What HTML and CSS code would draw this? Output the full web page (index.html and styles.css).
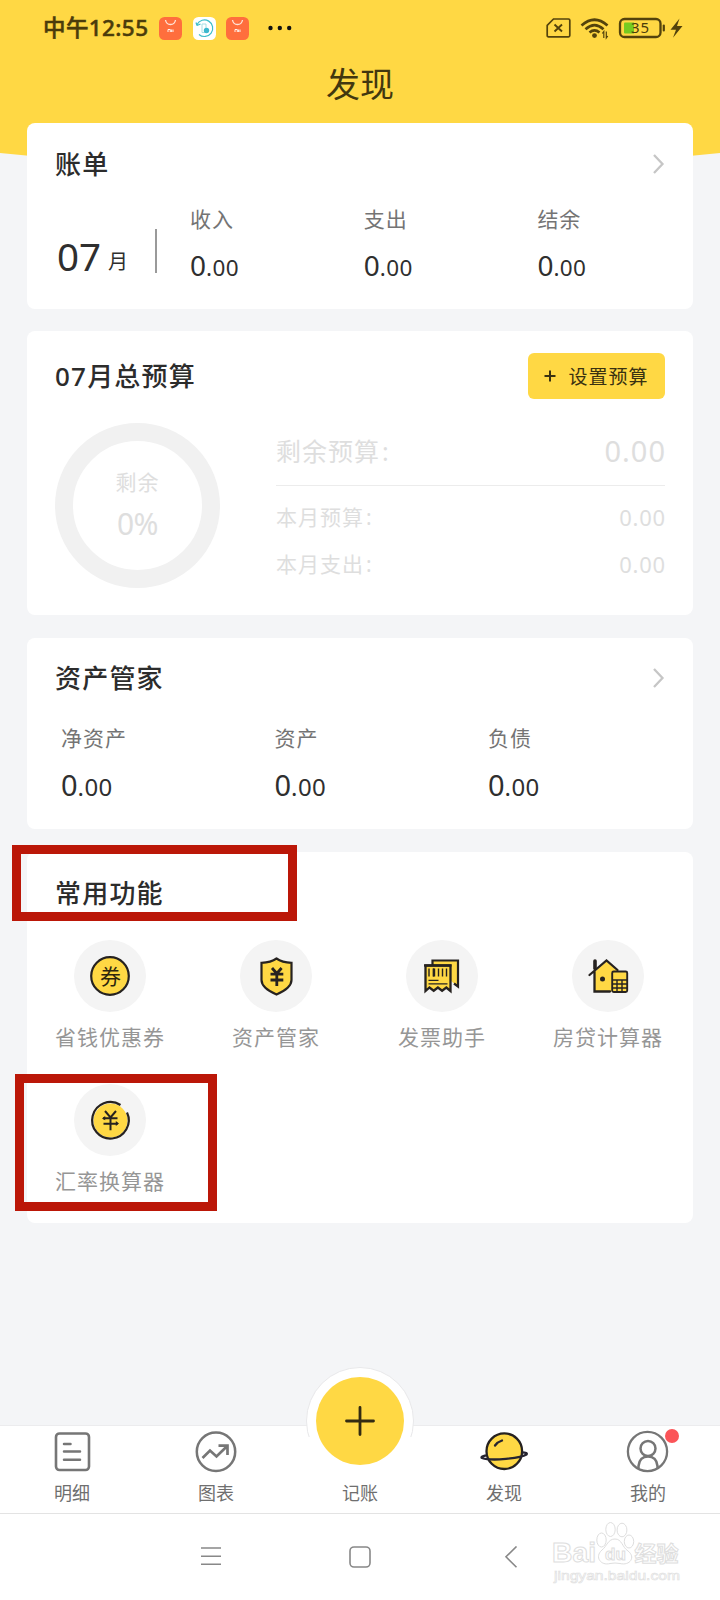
FILE: index.html
```
<!DOCTYPE html>
<html lang="zh-CN">
<head>
<meta charset="utf-8">
<title>发现</title>
<link rel="stylesheet" href="styles.css">
</head>
<body>
<div class="phone">
  <svg class="header-bg" viewBox="0 0 720 172" width="720" height="172"><path d="M0 0H720V153Q360 191 0 153Z" fill="#ffd844"/></svg>
  <header class="statusbar">
    <span class="clock">中午12:55</span>
    <svg class="app" viewBox="0 0 23 23"><rect width="23" height="23" rx="5.5" fill="#ff6e3d"/><path d="M6.5 3c1 6 9 6 10 0" fill="none" stroke="#ffe3d6" stroke-width="1.3"/><path d="M9 15v-2.500h2.300V15M12.600 12.500V15M14 12.500V15" fill="none" stroke="#fff" stroke-width=".9"/></svg>
    <svg class="app" viewBox="0 0 23 23"><rect width="23" height="23" rx="5.500" fill="#fff"/><path d="M4 7.500A8.300 8.300 0 1 1 6 17.500M4 8.500l3.500-1.500M4 8.500l-1-3" fill="none" stroke="#3dbdca" stroke-width="1.200"/><path d="M9 7h4v4M9 7v8.500h5" fill="none" stroke="#a5dfe4"/><circle cx="13.500" cy="13.500" r="2.700" fill="#3bb8ce"/></svg>
    <svg class="app" viewBox="0 0 23 23"><rect width="23" height="23" rx="5.500" fill="#ff6e3d"/><path d="M6.500 3c1 6 9 6 10 0" fill="none" stroke="#ffe3d6" stroke-width="1.300"/><path d="M9 15v-2.500h2.300V15M12.600 12.500V15M14 12.500V15" fill="none" stroke="#fff" stroke-width=".9"/></svg>
    <svg class="dots" viewBox="0 0 24 6" width="24" height="6"><g fill="#111"><circle cx="2.500" cy="3" r="2.200"/><circle cx="11.800" cy="3" r="2.200"/><circle cx="21.200" cy="3" r="2.200"/></g></svg>
    <svg class="status-icons" viewBox="0 0 138 24" width="138" height="24" fill="none" stroke="#54430c">
      <path d="M7.500 3H22.500q1.300 0 1.300 1.300V19.500q0 1.300-1.300 1.300H2.500q-1.300 0-1.300-1.300V9.300Z" stroke-width="1.700"/>
      <path d="M8.500 8.500l7.500 7M16 8.500l-7.500 7" stroke-width="1.900"/>
      <path d="M35.500 9.500Q48.500-2 61.500 9.500M39.500 13.200Q48.500 5 57.500 13.200M43.500 16.500Q48.500 12.300 53.500 16.500" stroke-width="2.700"/>
      <circle cx="48.500" cy="19.600" r="2.400" fill="#54430c" stroke="none"/>
      <path d="M57.800 22V15.500l-1.500 2M60.300 15.500V22l1.500-2" stroke-width="1.200"/>
      <rect x="74" y="3" width="40.500" height="18" rx="4.500" stroke-width="2.300"/>
      <path d="M78 7.500q0-1 1-1H88V17.500H79q-1 0-1-1Z" fill="#75cb20" stroke="none"/>
      <path d="M117.800 9.500v5" stroke-width="2.200" stroke-linecap="round"/>
      <path d="M133.500 2.500L124.500 13.800H130L127 21.800L136.500 10H131Z" fill="#54430c" stroke="none"/>
      <text x="94.500" y="17.300" text-anchor="middle" class="battery">35</text>
    </svg>
  </header>
  <h1 class="page-title">发现</h1>

  <main class="cards">
    <section class="card bill">
      <div class="card-head"><h2>账单</h2><svg class="chev" viewBox="0 0 14 22"><path d="M3 2l8.500 9L3 20"/></svg></div>
      <div class="bill-body">
        <div class="month"><b>07</b><span>月</span></div>
        <div class="stats">
          <div class="stat"><label>收入</label><p>0<small>.00</small></p></div>
          <div class="stat"><label>支出</label><p>0<small>.00</small></p></div>
          <div class="stat"><label>结余</label><p>0<small>.00</small></p></div>
        </div>
      </div>
    </section>

    <section class="card budget">
      <div class="card-head"><h2>07月总预算</h2><button class="set-budget"><svg viewBox="0 0 12 12" width="12" height="12"><path d="M6 .5v11M.5 6h11" stroke="#3a3211" stroke-width="2"/></svg><span>设置预算</span></button></div>
      <div class="budget-body">
        <div class="ring"><span>剩余</span><b>0%</b></div>
        <div class="budget-rows">
          <div class="row total"><span>剩余预算<i>:</i></span><b>0.00</b></div>
          <div class="row"><span>本月预算<i>:</i></span><b>0.00</b></div>
          <div class="row"><span>本月支出<i>:</i></span><b>0.00</b></div>
        </div>
      </div>
    </section>

    <section class="card assets">
      <div class="card-head"><h2>资产管家</h2><svg class="chev" viewBox="0 0 14 22"><path d="M3 2l8.500 9L3 20"/></svg></div>
      <div class="stats">
        <div class="stat"><label>净资产</label><p>0<small>.00</small></p></div>
        <div class="stat"><label>资产</label><p>0<small>.00</small></p></div>
        <div class="stat"><label>负债</label><p>0<small>.00</small></p></div>
      </div>
    </section>

    <section class="card tools">
      <div class="card-head"><h2>常用功能</h2></div>
      <div class="tool-grid">
        <div class="tool"><div class="disc"><svg viewBox="0 0 72 72"><circle cx="36" cy="36" r="18.800" fill="#ffd844" stroke="#262220" stroke-width="2.200"/><text x="36.500" y="43.500" text-anchor="middle" class="coupon">券</text></svg></div><span>省钱优惠券</span></div>
        <div class="tool"><div class="disc"><svg viewBox="0 0 72 72"><path d="M36.500 18.500Q42 22.500 51.500 22.800V40Q51.500 48 36.500 54.500Q21.500 48 21.500 40V22.800Q31 22.500 36.500 18.500Z" fill="#ffd844" stroke="#262220" stroke-width="2.200"/><path d="M32 28l4.800 5.500 4.800-5.500M30.500 34.200h12.800M30.500 40h12.800M36.800 33v13" fill="none" stroke="#262220" stroke-width="2.800"/></svg></div><span>资产管家</span></div>
        <div class="tool"><div class="disc"><svg viewBox="0 0 72 72" fill="none" stroke="#262220"><path d="M26.500 25V20.500H52V46.500l-4-3" fill="#ffd844" stroke-width="2.200"/><path d="M19.500 25.500H44.500V51l-4.200-3.500-4.200 3.200-4.200-3.200-4.200 3.200-4.200-3.200L19.500 51Z" fill="#ffd844" stroke-width="2.300"/><path d="M18 25.500h27.500" stroke-width="2.300"/><path d="M23 28.500v8M27.500 28.500v8M32.500 28.500v8M36.500 28.500v8M40.500 28.500v8" stroke-width="1.400"/><path d="M28 28.500v8" stroke-width="2.400"/><path d="M22.500 40.300h10M22.500 43.800h19" stroke-width="1.300"/></svg></div><span>发票助手</span></div>
        <div class="tool"><div class="disc"><svg viewBox="0 0 72 72" fill="none" stroke="#262220"><path d="M22.500 32L34.500 21.500 47 32V51.500H22.500Z" fill="#ffd844" stroke="none"/><path d="M23 28.500V21" stroke-width="3.600" stroke-linecap="round"/><path d="M17.500 35L34.500 20.500L45.500 30M22.500 31.500V51.500H38" stroke-width="2.300" stroke-linecap="round"/><circle cx="30.500" cy="39" r="2.500" fill="#262220" stroke="none"/><rect x="40.200" y="31.500" width="15" height="20.500" rx="1.500" fill="#ffd844" stroke-width="1.900"/><path d="M40 40h15M40 44h15M40 48h15M45 40v12M50 40v12" stroke-width="1.400"/></svg></div><span>房贷计算器</span></div>
        <div class="tool"><div class="disc"><svg viewBox="0 0 72 72" fill="none" stroke="#262220"><circle cx="36.500" cy="36.500" r="17" fill="#ffd844" stroke="none"/><path d="M46.500 21A18.300 18.300 0 1 0 53 28.500" stroke-width="2.200"/><path d="M31 27l5.500 6.500 5.500-6.500M29 34.200h14.500M29.500 39.700h14M36.500 33.500v12.800" stroke-width="2"/><path d="M28 34.500l3.200-2.500v4.300ZM45 39.500l-3.200-2.400v4.800Z" fill="#262220" stroke="none"/></svg></div><span>汇率换算器</span></div>
      </div>
    </section>
  </main>

  <nav class="tabbar">
    <div class="tab"><svg viewBox="0 0 48 44" fill="none" stroke="#767676"><rect x="8" y="3.500" width="33" height="36.500" rx="3.500" stroke-width="2.600"/><path d="M16 14h6.500M16 21.500h16M16 29.700h16" stroke-width="2.500" stroke-linecap="round"/></svg><span>明细</span></div>
    <div class="tab"><svg viewBox="0 0 48 44" fill="none" stroke="#767676"><circle cx="24" cy="21.700" r="19.200" stroke-width="2.500"/><path d="M10.500 28l7.500-7.500 6.500 6L35 16.200M26.500 15.700H35.500V25" stroke-width="2.700"/></svg><span>图表</span></div>
    <div class="tab add"><div class="halo"></div><div class="add-button"><svg viewBox="0 0 30 30" width="30" height="30"><path d="M15 1.500v27M1.500 15h27" stroke="#332b12" stroke-width="2.800" stroke-linecap="round"/></svg></div><span>记账</span></div>
    <div class="tab"><svg viewBox="0 0 48 44" fill="none" stroke="#262430"><circle cx="24.300" cy="21.200" r="17.800" fill="#ffd844" stroke="#262220" stroke-width="2.300"/><path d="M6 25.300Q0 27 2 28C12 31.500 41 28 46.500 24.500Q48 22.500 42 22.300" stroke-width="2.300"/><path d="M15 15.500q2.500-3.500 7-5" stroke-width="2.300" stroke-linecap="round"/></svg><span>发现</span></div>
    <div class="tab mine"><svg viewBox="0 0 48 44" fill="none" stroke="#767676"><circle cx="23.500" cy="21.500" r="19.600" stroke-width="2.300"/><circle cx="24" cy="18.500" r="7.500" stroke-width="2.500"/><path d="M14.500 38.500V36Q15.500 26.500 24 26.500T33.500 36V38" stroke-width="2.500"/></svg><i class="badge"></i><span>我的</span></div>
  </nav>

  <footer class="sysnav">
    <svg viewBox="0 0 22 22"><path d="M1 2h20M1 10.200h20M1 18.300h20"/></svg>
    <svg viewBox="0 0 22 22"><rect x="1" y="1" width="20" height="20" rx="4"/></svg>
    <svg viewBox="0 0 22 22"><path d="M18.500 .5L8 10.800l10.500 10.500"/></svg>
  </footer>

  <svg class="watermark" viewBox="0 0 140 70" width="140" height="70" fill="#fff" stroke="#dedede">
    <text x="5" y="43.500" class="wm-brand" textLength="44" lengthAdjust="spacingAndGlyphs">Bai</text>
    <g><ellipse cx="54.500" cy="22" rx="4.700" ry="7"/><ellipse cx="63.500" cy="11.500" rx="4.700" ry="7"/><ellipse cx="75" cy="12" rx="4.900" ry="6.800"/><ellipse cx="82" cy="23.500" rx="4.700" ry="6.500"/><path d="M68 21C61 21 60 28 55 32C47 39 54 48 63 45.500Q68 44.500 73 45.500C83 48 89 39 81 33C75 29 75 21 68 21Z"/></g>
    <text x="58" y="41.500" class="wm-du">du</text>
    <text x="87.500" y="42.500" class="wm-cn" textLength="44" lengthAdjust="spacingAndGlyphs">经验</text>
    <text x="7" y="62" class="wm-url" textLength="126" lengthAdjust="spacingAndGlyphs">jingyan.baidu.com</text>
  </svg>
  <div class="mark mark-title"></div>
  <div class="mark mark-rate"></div>
</div>
</body>
</html>
```
FILE: styles.css
```
* { box-sizing: border-box; margin: 0; padding: 0; }
body { width: 720px; background: #f4f5f7; font-family: "Noto Sans", "Noto Sans CJK SC", sans-serif; color: #2f2f2f; }
svg { display: block; flex: none; }
b, i, small { font-weight: inherit; font-style: normal; }
.phone { position: relative; width: 720px; height: 1600px; overflow: hidden; display: flex; flex-direction: column; }
.header-bg { position: absolute; left: 0; top: 0; }
.statusbar { position: relative; height: 56px; display: flex; align-items: center; padding: 0 36px 0 43px; }
.clock { width: 116px; font-size: 22.5px; font-weight: 500; letter-spacing: .4px; line-height: 30px; color: #4b3c0b; white-space: nowrap; -webkit-text-stroke: .5px #4b3c0b; }
.app { width: 23px; height: 23px; margin-right: 10.5px; }
.dots { margin-left: 8px; }
.status-icons { margin-left: auto; }
.battery { font: 400 15px "Noto Sans", sans-serif; letter-spacing: .8px; fill: #4b3c0b; stroke: none; }
.page-title { position: relative; height: 67px; line-height: 57px; text-align: center; font-weight: 400; font-size: 34px; color: #42370f; }

.cards { position: relative; flex: 1; display: flex; flex-direction: column; padding: 0 27px; }
.card { flex: none; background: #fff; border-radius: 8px; }
.card-head { display: flex; align-items: center; justify-content: space-between; padding: 0 28px; }
h2 { font-size: 26px; font-weight: 500; letter-spacing: 1.2px; line-height: 36px; color: #2c2c2c; }
.chev { width: 14px; height: 22px; fill: none; stroke: #c6c6c6; stroke-width: 2.3; }
.stat { flex: none; }
.stat label { display: block; font-size: 21px; line-height: 30px; letter-spacing: 1px; color: #747474; }
.stat p { font-size: 28px; line-height: 36px; letter-spacing: 0; }
.stat small { font-size: 22.5px; letter-spacing: .4px; }

.bill { height: 186px; margin-bottom: 22px; }
.bill .card-head { height: 82px; }
.bill-body { display: flex; }
.month { flex: none; width: 130px; height: 44px; margin-top: 24px; padding-left: 30px; border-right: 2px solid #9a9a9a; display: flex; align-items: baseline; line-height: 54px; white-space: nowrap; }
.month b { font-size: 38.5px; }
.month span { position: relative; top: -2px; font-size: 20px; margin-left: 7px; }
.bill .stats { display: flex; padding-left: 33px; margin-top: -1px; }
.bill .stat { width: 173.7px; }
.bill .stat:last-child { width: 110px; }
.bill .stat p { margin-top: 13px; }

.budget { height: 284px; margin-bottom: 23px; }
.budget .card-head { height: 90px; }
.set-budget { width: 137px; height: 46px; border: 0; border-radius: 6px; background: #ffd844; display: flex; align-items: center; justify-content: center; gap: 12px; font: 400 19px "Noto Sans CJK SC", sans-serif; letter-spacing: 1px; color: #3a3211; }
.set-budget span { margin-top: -2px; }
.budget-body { display: flex; padding: 2px 28px 0; gap: 56px; }
.ring { width: 165px; height: 165px; border: 18px solid #f1f1f1; border-radius: 50%; display: flex; flex-direction: column; align-items: center; padding-top: 25px; color: #dedede; }
.ring span { font-size: 21px; line-height: 32px; letter-spacing: 1px; }
.ring b { font-size: 30px; line-height: 40px; margin-top: 6px; letter-spacing: -.5px; }
.budget-rows { flex: 1; color: #dedede; }
.row { height: 47px; display: flex; align-items: center; justify-content: space-between; font-size: 21px; letter-spacing: 1px; line-height: 36px; }
.row b { font-size: 22px; letter-spacing: .8px; margin-right: -1px; }
.row i { margin-left: 2px; }
.row.total { height: 63px; padding-bottom: 6px; font-size: 25px; border-bottom: 1px solid #ececec; margin-bottom: 7px; }
.row.total b { font-size: 29px; letter-spacing: 1px; }

.assets { height: 191px; margin-bottom: 23px; }
.assets .card-head { height: 80px; }
.assets .stats { display: flex; padding: 5px 0 0 34px; }
.assets .stat { width: 213.5px; }
.assets .stat p { font-size: 29px; margin-top: 14px; }
.assets .stat small { font-size: 24px; }

.tools { height: 371px; }
.tools .card-head { height: 82px; }
.tool-grid { display: grid; grid-template-columns: repeat(4, 166px); grid-auto-rows: 144px; padding-top: 6px; }
.tool { display: flex; flex-direction: column; align-items: center; }
.tool .disc { width: 72px; height: 72px; border-radius: 50%; background: #f4f4f4; }
.tool span { margin-top: 10px; font-size: 21px; line-height: 30px; letter-spacing: 1px; color: #969696; }
.coupon { font: 400 21px "Noto Sans CJK SC", sans-serif; fill: #2d260e; stroke: none; }

.tabbar { position: relative; height: 88px; background: #fff; display: grid; grid-template-columns: repeat(5, 144px); border-top: 1px solid #ececee; }
.tab { position: relative; display: flex; flex-direction: column; align-items: center; padding-top: 4px; }
.tab svg { width: 48px; height: 44px; }
.tab span { position: relative; font-size: 18px; line-height: 26px; margin-top: 6px; color: #6f6f6f; }
.halo { position: absolute; left: 18px; top: -59px; width: 108px; height: 108px; border-radius: 50%; background: #fff; border: 1.5px solid #e8e8ea; clip-path: inset(0 0 38px 0); }
.add-button { position: relative; width: 88px; height: 88px; margin-top: -53px; border-radius: 50%; background: #ffd844; display: flex; align-items: center; justify-content: center; }
.add-button svg { width: 30px; height: 30px; }
.tab.add span { margin-top: 15px; }
.badge { position: absolute; left: 89px; top: 3px; width: 14px; height: 14px; border-radius: 50%; background: #fb5458; }
.sysnav { height: 87px; background: #fff; border-top: 1px solid #e3e3e3; display: flex; justify-content: center; padding: 32px 0 0; gap: 127px; }
.sysnav svg { width: 22px; height: 22px; fill: none; stroke: #888; stroke-width: 1.6; }
.watermark { position: absolute; left: 547px; top: 1518px; }
.wm-brand { font: 700 27px "Liberation Sans", sans-serif; }
.wm-du { font: 700 17px "Liberation Sans", sans-serif; }
.wm-cn { font: 700 21px "Noto Sans CJK SC", sans-serif; }
.wm-url { font: 400 13px "Liberation Sans", sans-serif; stroke-width: .6px; }
.mark { position: absolute; border: 9.5px solid #bb1708; }
.mark-title { left: 12px; top: 845px; width: 285px; height: 76px; }
.mark-rate { left: 15px; top: 1074px; width: 202px; height: 137px; }
```
